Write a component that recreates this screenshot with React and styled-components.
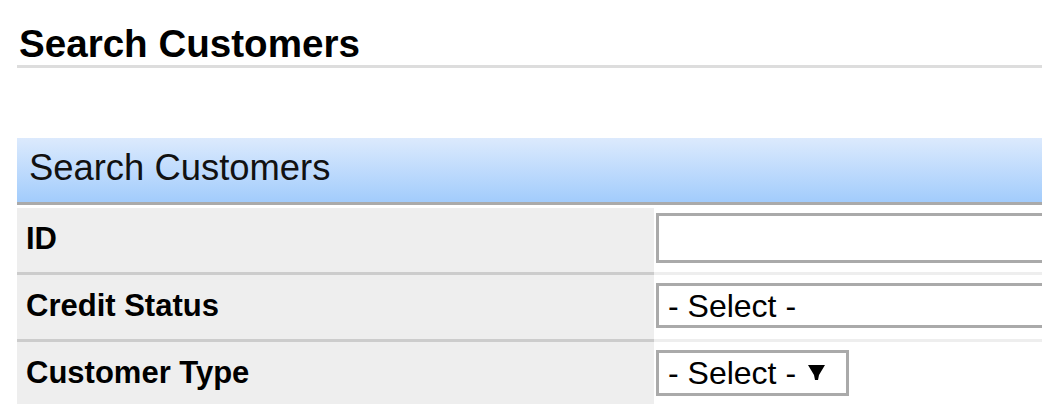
import React from 'react';
import styled, { createGlobalStyle } from 'styled-components';

const GlobalStyle = createGlobalStyle`
  html, body {
    margin: 0;
    padding: 0;
    background: #fff;
  }
  body {
    font-family: "Liberation Sans", Arial, sans-serif;
    color: #000;
    overflow: hidden;
  }
`;

const Page = styled.div`
  width: 1025px;
  margin-left: 17px;
  overflow: hidden;
`;

const Title = styled.h1`
  margin: 24px 0 0;
  padding: 0 0 2px 2px;
  font-size: 38.6px;
  line-height: 39px;
  font-weight: bold;
  border-bottom: 3px solid #dddddd;
`;

const Panel = styled.div`
  margin-top: 70px;
`;

const PanelHeader = styled.div`
  height: 64px;
  padding-left: 12px;
  font-size: 36.4px;
  line-height: 59px;
  color: #111;
  background: linear-gradient(#dceafd, #a2ccfc);
  border-bottom: 3px solid #aaaaaa;
  margin-bottom: 3px;
`;

const Row = styled.div`
  display: grid;
  grid-template-columns: 637px 1fr;
`;

const Label = styled.div`
  height: 62px;
  padding: 0 0 ${p => (p.last ? 0 : 2)}px 9px;
  display: flex;
  align-items: center;
  font-size: 31px;
  font-weight: bold;
  background: #eeeeee;
  border-bottom: 3px solid ${p => (p.last ? '#fff' : '#cccccc')};
`;

const Value = styled.div`
  padding: ${p => p.top}px 0 0 2px;
  background: #fff;
  border-bottom: 3px solid ${p => (p.last ? '#fff' : '#eeeeee')};
  overflow: hidden;
`;

const TextInput = styled.input`
  display: block;
  width: 420px;
  height: 50px;
  box-sizing: border-box;
  border: 3px solid #aaaaaa;
  background: #fff;
  padding: 0 9px;
  font-family: "Liberation Sans", Arial, sans-serif;
  font-size: 32px;
  outline: none;
`;

const SelectBox = styled.div`
  display: flex;
  align-items: center;
  width: ${p => p.width}px;
  height: ${p => p.height}px;
  box-sizing: border-box;
  border: 3px solid #aaaaaa;
  padding: 0 0 0 9px;
  background: #fff;
  font-size: 32px;
  line-height: 1;
  color: #000;
  white-space: nowrap;
`;

const Caret = styled.svg`
  margin-left: 12px;
  margin-bottom: 2px;
  flex: none;
`;

const Select = ({ width, height, arrow }) => (
  <SelectBox width={width} height={height}>
    <span>- Select -</span>
    {arrow && (
      <Caret width="17" height="15" viewBox="0 0 17 15">
        <polygon points="0,0 17,0 11,10 10,15 7,15 6,10" fill="#000" />
      </Caret>
    )}
  </SelectBox>
);

export default function App() {
  return (
    <Page>
      <GlobalStyle />
      <Title>Search Customers</Title>
      <Panel>
        <PanelHeader>Search Customers</PanelHeader>
        <Row>
          <Label>ID</Label>
          <Value top={5}>
            <TextInput type="text" />
          </Value>
        </Row>
        <Row>
          <Label>Credit Status</Label>
          <Value top={8}>
            <Select width={420} height={45} />
          </Value>
        </Row>
        <Row>
          <Label last>Customer Type</Label>
          <Value top={8} last>
            <Select width={193} height={46} arrow />
          </Value>
        </Row>
      </Panel>
    </Page>
  );
}
